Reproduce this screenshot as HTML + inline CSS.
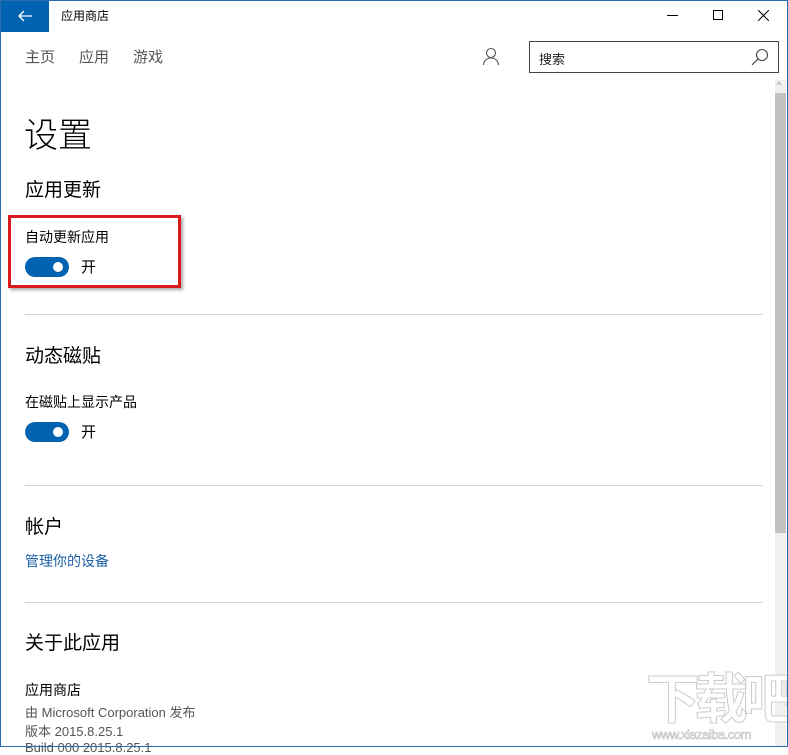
<!DOCTYPE html>
<html><head><meta charset="utf-8"><style>
*{margin:0;padding:0;box-sizing:border-box}
body{width:788px;height:747px;overflow:hidden;background:#fff;font-family:"Liberation Sans","Noto Sans CJK SC",sans-serif;position:relative;color:#000}
.a{position:absolute;white-space:nowrap}
.frame{position:absolute;left:0;top:0;width:788px;height:747px;border:1px solid #2b6ab0;pointer-events:none}
.tg{position:absolute;width:44px;height:20px;border-radius:10px;background:#0063b1}
.tg i{position:absolute;right:6px;top:5px;width:10px;height:10px;border-radius:5px;background:#fff}
.hr{position:absolute;left:25px;width:738px;height:1px;background:#d4d4d4}
</style></head><body>
<div class="a" style="left:1px;top:1px;width:48px;height:31px;background:#0063b1"></div>
<svg class="a" style="left:17px;top:9px" width="16" height="14" viewBox="0 0 16 14"><path d="M15 7H2M7 2L2 7l5 5" stroke="#fff" stroke-width="1.3" fill="none"/></svg>
<div class="a" style="left:61px;top:7px;font-size:12px">应用商店</div>
<div class="a" style="left:667px;top:15px;width:11px;height:1px;background:#000"></div>
<div class="a" style="left:713px;top:10px;width:10px;height:10px;border:1px solid #000"></div>
<svg class="a" style="left:758px;top:10px" width="11" height="11"><path d="M0 0L11 11M11 0L0 11" stroke="#000" stroke-width="1"/></svg>
<div class="a" style="left:25px;top:46px;font-size:15px;color:#555">主页</div>
<div class="a" style="left:79px;top:46px;font-size:15px;color:#555">应用</div>
<div class="a" style="left:133px;top:46px;font-size:15px;color:#555">游戏</div>
<svg class="a" style="left:482px;top:47px" width="18" height="20" viewBox="0 0 18 20"><circle cx="9" cy="6" r="4.5" stroke="#555" fill="none" stroke-width="1.1"/><path d="M1.5 18c0-4 3.5-7 7.5-7s7.5 3 7.5 7" stroke="#555" fill="none" stroke-width="1.1"/></svg>
<div class="a" style="left:529px;top:41px;width:250px;height:32px;border:1.5px solid #444"></div>
<div class="a" style="left:539px;top:49px;font-size:13px;color:#222">搜索</div>
<svg class="a" style="left:751px;top:48px" width="18" height="18" viewBox="0 0 18 18"><circle cx="11" cy="7" r="5.5" stroke="#444" fill="none" stroke-width="1.1"/><path d="M7 11L1 17" stroke="#444" stroke-width="1.2"/></svg>
<div class="a" style="left:775px;top:80px;width:11px;height:666px;background:#f0f0f0"></div>
<div class="a" style="left:775px;top:93px;width:11px;height:440px;background:#c2c2c2"></div>
<div class="a" style="left:777px;top:80px;font-size:9px;color:#888">^</div>
<div class="a" style="left:24px;top:108px;font-size:34px;font-weight:300">设置</div>
<div class="a" style="left:25px;top:175px;font-size:19px">应用更新</div>
<div class="a" style="left:25px;top:227px;font-size:14px">自动更新应用</div>
<div class="tg" style="left:25px;top:257px"><i></i></div>
<div class="a" style="left:81px;top:256px;font-size:15px">开</div>
<div class="a" style="left:8px;top:215px;width:173px;height:73px;border:3px solid #d9191c;box-shadow:2px 2px 3px rgba(0,0,0,.35)"></div>
<div class="hr" style="top:314px"></div>
<div class="a" style="left:25px;top:341px;font-size:19px">动态磁贴</div>
<div class="a" style="left:25px;top:392px;font-size:14px">在磁贴上显示产品</div>
<div class="tg" style="left:25px;top:422px"><i></i></div>
<div class="a" style="left:81px;top:421px;font-size:15px">开</div>
<div class="hr" style="top:485px"></div>
<div class="a" style="left:25px;top:512px;font-size:19px">帐户</div>
<div class="a" style="left:25px;top:551px;font-size:14px;color:#1a5fa5">管理你的设备</div>
<div class="hr" style="top:602px"></div>
<div class="a" style="left:25px;top:628px;font-size:19px">关于此应用</div>
<div class="a" style="left:25px;top:680px;font-size:14px">应用商店</div>
<div class="a" style="left:25px;top:702px;font-size:13px;color:#555">由 Microsoft Corporation 发布</div>
<div class="a" style="left:25px;top:721px;font-size:13px;color:#555">版本 2015.8.25.1</div>
<div class="a" style="left:25px;top:740px;font-size:13px;color:#555">Build 000 2015.8.25.1</div>
<div class="a" style="left:646px;top:655px;font-size:54px;font-weight:bold;color:#fff;-webkit-text-stroke:1px #ccc;letter-spacing:-6px">下载吧</div>
<div class="a" style="left:652px;top:727px;font-size:13px;color:#fff;-webkit-text-stroke:.6px #bbb;letter-spacing:-0.5px">www.xiazaiba.com</div>
<div class="frame"></div>
</body></html>
